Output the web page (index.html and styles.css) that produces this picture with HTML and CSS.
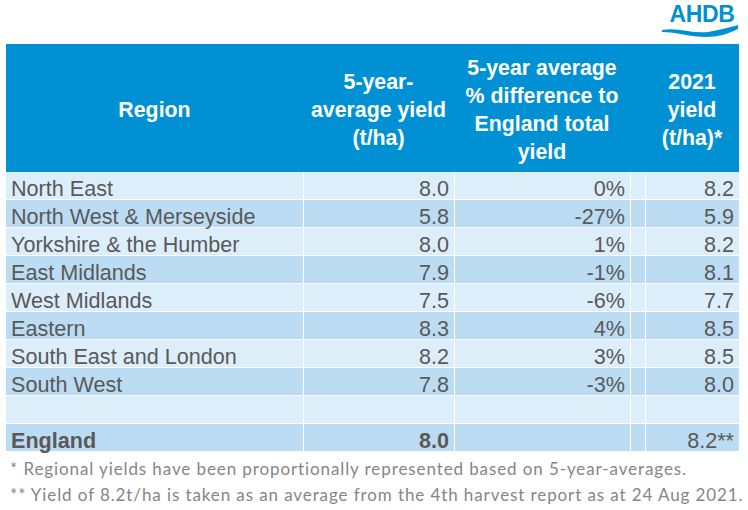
FILE: index.html
```html
<!DOCTYPE html>
<html lang="en">
<head>
<meta charset="utf-8">
<title>Regional yields</title>
<link rel="stylesheet" href="styles.css">
</head>
<body>
<div class="page">
  <div class="topbar">
    <div class="logo">
      <span class="logo-text">AHDB</span>
      <svg class="logo-wave" width="76" height="12" viewBox="0 0 76 12">
        <path d="M0,5 C16,2 30,9 46,7 C58,5 68,2 76,0 L76,4 C66,9 56,12 44,12 C28,12 14,7 0,7 Z" fill="#0091d5"/>
      </svg>
    </div>
  </div>
  <table class="yield-table">
    <colgroup>
      <col class="c-region">
      <col class="c-avg">
      <col class="c-diff">
      <col class="c-gap">
      <col class="c-2021">
    </colgroup>
    <thead>
      <tr>
        <th>Region</th>
        <th>5-year-<br>average yield<br>(t/ha)</th>
        <th>5-year average<br>% difference to<br>England total<br>yield</th>
        <th></th>
        <th>2021<br>yield<br>(t/ha)*</th>
      </tr>
    </thead>
    <tbody>
      <tr class="light"><td class="name">North East</td><td>8.0</td><td>0%</td><td></td><td>8.2</td></tr>
      <tr class="dark"><td class="name">North West &amp; Merseyside</td><td>5.8</td><td>-27%</td><td></td><td>5.9</td></tr>
      <tr class="light"><td class="name">Yorkshire &amp; the Humber</td><td>8.0</td><td>1%</td><td></td><td>8.2</td></tr>
      <tr class="dark"><td class="name">East Midlands</td><td>7.9</td><td>-1%</td><td></td><td>8.1</td></tr>
      <tr class="light"><td class="name">West Midlands</td><td>7.5</td><td>-6%</td><td></td><td>7.7</td></tr>
      <tr class="dark"><td class="name">Eastern</td><td>8.3</td><td>4%</td><td></td><td>8.5</td></tr>
      <tr class="light"><td class="name">South East and London</td><td>8.2</td><td>3%</td><td></td><td>8.5</td></tr>
      <tr class="dark"><td class="name">South West</td><td>7.8</td><td>-3%</td><td></td><td>8.0</td></tr>
      <tr class="light"><td class="name">&nbsp;</td><td></td><td></td><td></td><td></td></tr>
      <tr class="dark total"><td class="name strong">England</td><td class="strong">8.0</td><td></td><td></td><td>8.2**</td></tr>
    </tbody>
  </table>
  <div class="notes">
    <p>* Regional yields have been proportionally represented based on 5-year-averages.</p>
    <p>** Yield of 8.2t/ha is taken as an average from the 4th harvest report as at 24 Aug 2021.</p>
  </div>
</div>
</body>
</html>
```

FILE: styles.css
```css
html, body {
  margin: 0;
  padding: 0;
  background: #ffffff;
}

.page {
  width: 748px;
  height: 510px;
  overflow: hidden;
  font-family: "Liberation Sans", Arial, sans-serif;
}

.topbar {
  height: 44px;
  display: flex;
  justify-content: flex-end;
  padding-right: 10px;
  box-sizing: border-box;
}

.logo {
  width: 76px;
  height: 40px;
}

.logo-text {
  display: block;
  text-align: center;
  padding-top: 1px;
  padding-left: 4px;
  font-size: 23px;
  line-height: 26px;
  font-weight: bold;
  color: #0091d5;
  letter-spacing: -0.3px;
}

.logo-wave {
  display: block;
  margin-top: -2px;
}

.yield-table {
  margin-left: 6px;
  width: 733px;
  table-layout: fixed;
  border-collapse: separate;
  border-spacing: 0;
  color: #595959;
}

.c-region { width: 297px; }
.c-avg { width: 151px; }
.c-diff { width: 176px; }
.c-gap { width: 15px; }
.c-2021 { width: 94px; }

.yield-table th {
  background: #0091d5;
  color: #ffffff;
  font-size: 21.33px;
  font-weight: bold;
  line-height: 28px;
  height: 112px;
  padding: 10px 0 6px;
  text-align: center;
  vertical-align: middle;
}

.yield-table td {
  font-size: 21.6px;
  line-height: 21px;
  padding: 6px 5px 0 0;
  height: 21px;
  text-align: right;
  white-space: nowrap;
  border-bottom: 1px solid #ffffff;
  border-left: 1px solid #ffffff;
}

.yield-table td.name {
  text-align: left;
  padding-left: 5px;
  border-left: none;
}

.yield-table td.strong {
  font-weight: bold;
}

.light td { background: #ddeefb; }
.dark td { background: #bcdcf4; }

.notes {
  padding-left: 10px;
  padding-top: 4px;
  font-family: "Lato", "Open Sans", sans-serif;
  font-size: 17px;
  line-height: 26px;
  letter-spacing: 0.9px;
  color: #868686;
}

.notes p {
  margin: 0;
  white-space: nowrap;
}
```
